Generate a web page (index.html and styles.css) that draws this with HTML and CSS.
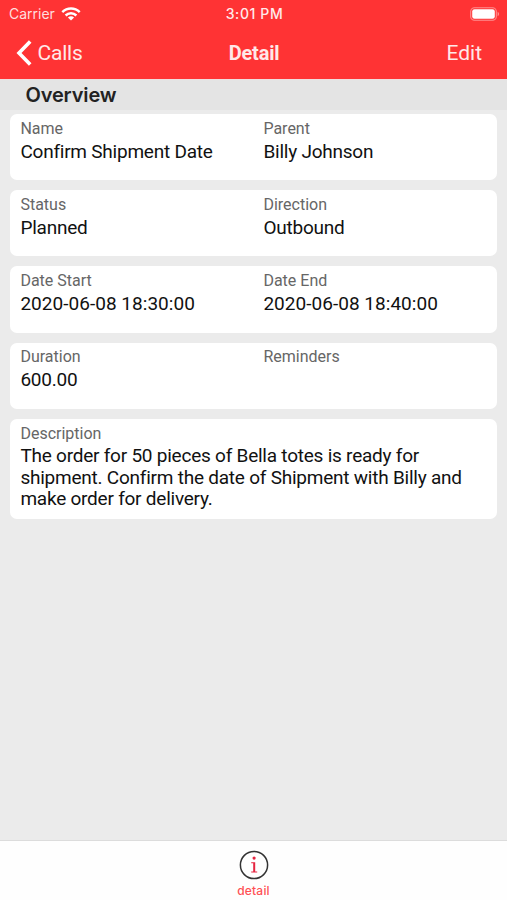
FILE: index.html
```html
<!DOCTYPE html>
<html lang="en">
<head>
<meta charset="utf-8">
<title>Detail</title>
<link rel="stylesheet" href="styles.css">
</head>
<body>
<div class="screen">
  <header class="header">
    <div class="status">
      <div class="carrier"><span class="carrier-name">Carrier</span>
        <svg class="wifi" width="20" height="14" viewBox="0 0 20 14" fill="none" stroke="#fff" stroke-width="2.5">
          <path d="M1.3 5.1a12.5 12.5 0 0 1 17.4 0"/>
          <path d="M4.6 8.5a7.8 7.8 0 0 1 10.8 0"/>
          <path d="M10 13.6 6.9 10.6a4.5 4.5 0 0 1 6.2 0z" fill="#fff" stroke="none"/>
        </svg>
      </div>
      <span class="clock">3:01 PM</span>
      <svg class="battery" width="30" height="14" viewBox="0 0 30 14">
        <rect x=".7" y=".7" width="25.6" height="12.6" rx="3.8" fill="none" stroke="#ff9090" stroke-width="1.1"/>
        <rect x="2.2" y="2.2" width="22.6" height="9.6" rx="2.3" fill="#fff"/>
        <path d="M27.6 4.8c2 .8 2 3.6 0 4.4z" fill="#ff9090"/>
      </svg>
    </div>
    <nav class="nav">
      <a class="back">
        <svg width="16" height="26" viewBox="0 0 16 26" fill="none" stroke="#fff" stroke-width="3.6"><path d="M14.2 1.4 3 13l11.2 11.6"/></svg>
        <span class="back-label">Calls</span>
      </a>
      <h1 class="title">Detail</h1>
      <a class="edit">Edit</a>
    </nav>
  </header>
  <h2 class="section">Overview</h2>
  <main class="cards">
    <section class="card">
      <div class="field"><div class="label">Name</div><div class="value">Confirm Shipment Date</div></div>
      <div class="field"><div class="label">Parent</div><div class="value">Billy Johnson</div></div>
    </section>
    <section class="card">
      <div class="field"><div class="label">Status</div><div class="value">Planned</div></div>
      <div class="field"><div class="label">Direction</div><div class="value">Outbound</div></div>
    </section>
    <section class="card">
      <div class="field"><div class="label">Date Start</div><div class="value value-date">2020-06-08 18:30:00</div></div>
      <div class="field"><div class="label">Date End</div><div class="value value-date">2020-06-08 18:40:00</div></div>
    </section>
    <section class="card">
      <div class="field"><div class="label">Duration</div><div class="value">600.00</div></div>
      <div class="field"><div class="label">Reminders</div></div>
    </section>
    <section class="card card-wide">
      <div class="field"><div class="label">Description</div><div class="value">The order for 50 pieces of Bella totes is ready for<br>shipment. Confirm the date of Shipment with Billy and<br>make order for delivery.</div></div>
    </section>
  </main>
  <footer class="tabbar">
    <svg width="30" height="30" viewBox="0 0 30 30">
      <circle cx="15" cy="15" r="13.6" fill="none" stroke="#333" stroke-width="1.5"/>
      <circle cx="15.1" cy="8.1" r="1.6" fill="#e52440"/>
      <path d="M12.2 12.3h4v9.2h2v1h-6v-1h2v-8.2h-2z" fill="#e52440"/>
    </svg>
    <span class="tab-label">detail</span>
  </footer>
</div>
</body>
</html>
```

FILE: styles.css
```css
* { box-sizing: border-box; }
body { margin: 0; font-family: Roboto, "Liberation Sans", sans-serif; }
.screen { width: 507px; height: 900px; display: flex; flex-direction: column; background: #ebebeb; overflow: hidden; }
.header { height: 79px; background: #ff3334; color: #fff; }
.status { height: 27px; display: grid; grid-template-columns: 1fr auto 1fr; align-items: center; padding: 0 7px 0 9px; font: 14px/28px Inter, sans-serif; }
.carrier { display: flex; align-items: center; gap: 6px; color: #ffdede; }
.wifi { margin-bottom: 1px; }
.clock { font-weight: 500; font-size: 14px; letter-spacing: 0.6px; color: #ffeaea; }
.battery { justify-self: end; }
.nav { height: 52px; display: grid; grid-template-columns: 1fr auto 1fr; align-items: center; padding: 0 25px 0 16px; color: #ffe8e8; }
.back { display: flex; align-items: center; gap: 5.5px; font-size: 21px; line-height: 26px; letter-spacing: -0.2px; }
.title { margin: 0 0 0 10px; font-size: 20px; line-height: 26px; font-weight: 700; letter-spacing: -0.2px; }
.edit { justify-self: end; font-size: 21px; line-height: 26px; }
.section { margin: 0; height: 31px; padding-left: 25.5px; background: #e4e4e4; border-top: 1px solid #efdede; color: #222; font: 600 20px/30px Inter, sans-serif; letter-spacing: -0.15px; }
.cards { flex: 1; display: flex; flex-direction: column; gap: 10px; padding: 4.3px 10px 0 10.4px; }
.card { height: 66.1px; display: grid; grid-template-columns: 243px 1fr; padding: 5.9px 10px 0; background: #fff; border-radius: 7px; }
.card-wide { height: 100px; grid-template-columns: 1fr; }
.label { font-size: 16px; line-height: 18px; color: #666; }
.value { margin-top: 2.9px; font-size: 19px; line-height: 21.4px; letter-spacing: -0.23px; color: #111; white-space: nowrap; }
.value-date { letter-spacing: 0.03px; }
.tabbar { height: 60px; display: flex; flex-direction: column; align-items: center; padding-top: 9px; background: #fefefe; border-top: 1px solid #dcdcdc; }
.tab-label { margin-top: 3px; font: 500 12px/16px Inter, sans-serif; letter-spacing: 0.2px; color: #ff5055; }
```
